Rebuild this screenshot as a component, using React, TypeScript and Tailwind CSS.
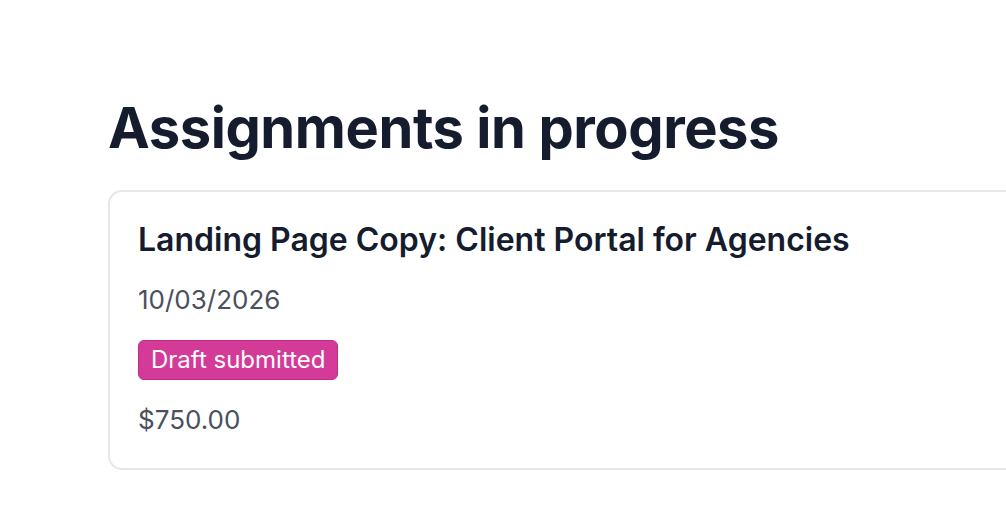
export default function App() {
  return (
    <div className="min-h-screen bg-white pl-[108px] pt-[96px] font-['Inter',sans-serif]">
      <h1 className="text-[56px] font-bold leading-[64px] tracking-[-0.0075em] text-[#141c2e]">
        Assignments in progress
      </h1>
      <div className="mt-[30px] w-[1000px] rounded-[14px] border-2 border-[#e6e7ea] px-[28px] pb-[31px] pt-[28px]">
        <h2 className="text-[32px] font-semibold leading-[40px] text-[#141c2e]">
          Landing Page Copy: Client Portal for Agencies
        </h2>
        <p className="mt-[23px] text-[26px] leading-[34px] text-[#4a5060]">10/03/2026</p>
        <span className="mt-[23px] inline-block rounded-[6px] border border-[#bd2d85] bg-[#d43a97] px-[12px] text-[24px] leading-[38px] text-white">
          Draft submitted
        </span>
        <p className="mt-[23px] text-[26px] leading-[34px] text-[#4a5060]">$750.00</p>
      </div>
    </div>
  );
}
